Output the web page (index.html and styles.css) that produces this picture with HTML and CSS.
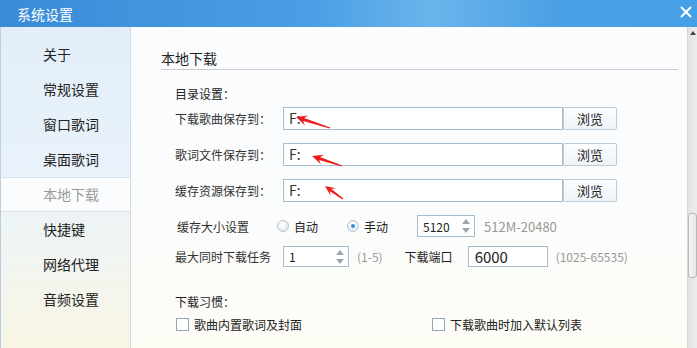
FILE: index.html
```html
<!DOCTYPE html>
<html lang="zh-CN">
  <head>
    <meta charset="UTF-8">
    <title>系统设置</title>
    <link rel="stylesheet" href="styles.css">
  </head>
  <body>
    <div class="window">
      <!-- Title bar -->
      <div class="titlebar">
        <span class="title">系统设置</span>
        <svg class="close" width="12" height="12" viewBox="0 0 12 12">
          <path d="M1 1 L11 11 M11 1 L1 11" stroke="#fff" stroke-width="2" fill="none"/>
        </svg>
      </div>

      <div class="body">
        <!-- Side menu -->
        <ul class="sidebar">
          <li>关于</li>
          <li>常规设置</li>
          <li>窗口歌词</li>
          <li>桌面歌词</li>
          <li class="active">本地下载</li>
          <li>快捷键</li>
          <li>网络代理</li>
          <li>音频设置</li>
        </ul>

        <!-- Settings panel -->
        <div class="content">
          <div class="section-title">本地下载</div>
          <div class="form">
            <div class="group-label">目录设置：</div>

            <div class="path-row first">
              <span class="label">下载歌曲保存到：</span>
              <div class="path-input">F:</div>
              <button class="browse">浏览</button>
            </div>
            <div class="path-row">
              <span class="label">歌词文件保存到：</span>
              <div class="path-input">F:</div>
              <button class="browse">浏览</button>
            </div>
            <div class="path-row">
              <span class="label">缓存资源保存到：</span>
              <div class="path-input">F:</div>
              <button class="browse">浏览</button>
            </div>

            <div class="cache-row">
              <span class="label cache-label">缓存大小设置</span>
              <span class="radio"></span><span class="radio-text">自动</span>
              <span class="radio checked"></span><span class="radio-text">手动</span>
              <div class="spinner cache-size">
                <span class="value">5120</span>
                <span class="arrows"><i class="up"></i><i class="down"></i></span>
              </div>
              <span class="hint size-hint">512M-20480</span>
            </div>

            <div class="task-row">
              <span class="label">最大同时下载任务</span>
              <div class="spinner tasks">
                <span class="value">1</span>
                <span class="arrows"><i class="up"></i><i class="down"></i></span>
              </div>
              <span class="hint">(1-5)</span>
              <span class="port-label">下载端口</span>
              <div class="port-input">6000</div>
              <span class="hint">(1025-65535)</span>
            </div>

            <div class="group-label habit">下载习惯：</div>
            <div class="check-row">
              <label class="check first-check"><span class="box"></span>歌曲内置歌词及封面</label>
              <label class="check"><span class="box"></span>下载歌曲时加入默认列表</label>
            </div>
          </div>
        </div>

        <!-- Scrollbar -->
        <div class="scrollbar">
          <div class="scroll-up"></div>
          <div class="thumb"></div>
        </div>
      </div>

      <!-- Red annotation arrows -->
      <svg class="annotations" width="697" height="348" viewBox="0 0 697 348">
        <polygon fill="#ee1c1c" points="296,117 304.9,125.2 303.2,120.9 329.8,128.6 330.2,127.4 304.1,118.0 308.0,115.6"/>
        <polygon fill="#ee1c1c" points="312,156 320.9,164.2 319.1,160.0 341.8,166.6 342.2,165.4 320.1,157.1 324.0,154.7"/>
        <polygon fill="#ee1c1c" points="325,186 330.5,195.5 329.9,191.2 342.6,199.5 343.4,198.5 331.4,189.1 335.8,188.2"/>
      </svg>
    </div>
  </body>
</html>
```

FILE: styles.css
```css
/* General */
* {
  box-sizing: border-box;
}

body {
  margin: 0;
  width: 697px;
  height: 348px;
  overflow: hidden;
  font-family: "Noto Sans CJK SC", "Microsoft YaHei", sans-serif;
  font-size: 12px;
  color: #333;
}

.window {
  position: relative;
  width: 697px;
  height: 348px;
  display: flex;
  flex-direction: column;
}

/* Title bar */
.titlebar {
  height: 27px;
  display: flex;
  align-items: center;
  justify-content: space-between;
  padding: 0 5px 0 17px;
  background: linear-gradient(90deg, #3a8bd7 0%, #4a9fe4 45%, #6ab4ec 62%, #4aa0e4 80%, #45a0e6 100%);
}

.title {
  color: #fff;
  font-size: 14px;
  line-height: 20px;
}

.close {
  margin-bottom: 4px;
}

.body {
  flex: 1;
  display: flex;
  min-height: 0;
}

/* Side menu */
.sidebar {
  width: 131px;
  margin: 0;
  padding: 10px 0 0;
  list-style: none;
  border-left: 1px solid #b9cfe4;
  border-right: 1px solid #cfdbe6;
  background: linear-gradient(180deg, #e2eef9 0%, #e9f2fa 45%, #f1f5f2 70%, #f8f5e4 100%);
}

.sidebar li {
  height: 35px;
  line-height: 35px;
  padding-left: 42px;
  font-size: 14px;
  color: #222;
}

.sidebar li.active {
  background: #fbfcfd;
  color: #9a9a9a;
  border-top: 1px solid #d8e2ea;
  border-bottom: 1px solid #d8e2ea;
  line-height: 33px;
}

/* Settings panel */
.content {
  flex: 1;
  padding: 21px 9px 0 30px;
  background: linear-gradient(180deg, #fafcfe 0%, #fbfcfc 55%, #fdfcf5 100%);
}

.section-title {
  height: 22px;
  font-size: 14px;
  line-height: 20px;
  color: #222;
  border-bottom: 1px solid #c9cdd1;
}

.form {
  padding-left: 14px;
}

.group-label {
  margin-top: 15px;
  line-height: 18px;
  color: #222;
}

.group-label.habit {
  margin-top: 26px;
}

.label {
  width: 108px;
  color: #333;
}

/* Path rows */
.path-row {
  display: flex;
  align-items: center;
  height: 23px;
  margin-top: 13px;
}

.path-row.first {
  margin-top: 4px;
}

.path-input {
  width: 280px;
  height: 23px;
  border: 1px solid #a7bccf;
  background: #fff;
  padding-left: 5px;
  font-size: 14px;
  line-height: 21px;
  color: #333;
}

.browse {
  width: 54px;
  height: 23px;
  margin: 0;
  padding: 0;
  border: 1px solid #bccbd8;
  border-radius: 2px;
  background: linear-gradient(180deg, #fbfdfe 0%, #eef3f7 100%);
  font-family: inherit;
  font-size: 13px;
  color: #222;
}

/* Cache size row */
.cache-row {
  display: flex;
  align-items: center;
  height: 22px;
  margin-top: 13px;
}

.cache-label {
  width: 100px;
  margin-left: 2px;
}

.radio {
  width: 12px;
  height: 12px;
  border-radius: 50%;
  border: 1px solid #b7c3cd;
  background: radial-gradient(circle at 40% 35%, #fff 0%, #dfe6ec 100%);
  position: relative;
}

.radio.checked {
  margin-left: 29px;
}

.radio.checked::after {
  content: "";
  position: absolute;
  left: 3px;
  top: 3px;
  width: 4px;
  height: 4px;
  border-radius: 50%;
  background: #2f8fdc;
}

.radio-text {
  margin-left: 5px;
  color: #222;
}

.spinner {
  height: 22px;
  border: 1px solid #a7bccf;
  background: #fff;
  display: flex;
  align-items: center;
  justify-content: space-between;
  padding: 0 4px 0 5px;
  color: #222;
}

.spinner.cache-size {
  width: 58px;
  margin-left: 29px;
}

.spinner.tasks {
  width: 66px;
  height: 21px;
}

.arrows {
  display: flex;
  flex-direction: column;
  gap: 4px;
}

.arrows i {
  width: 0;
  height: 0;
  border-left: 4px solid transparent;
  border-right: 4px solid transparent;
}

.arrows .up {
  border-bottom: 5px solid #9aa7b2;
}

.arrows .down {
  border-top: 5px solid #9aa7b2;
}

.hint {
  margin-left: 8px;
  color: #999;
}

.size-hint {
  margin-left: 9px;
  font-size: 13px;
}

/* Task / port row */
.task-row {
  display: flex;
  align-items: center;
  height: 21px;
  margin-top: 9px;
}

.port-label {
  margin-left: 22px;
  color: #222;
}

.port-input {
  width: 80px;
  height: 21px;
  margin-left: 15px;
  border: 1px solid #a7bccf;
  background: #fff;
  padding-left: 6px;
  font-size: 15px;
  line-height: 19px;
  color: #222;
}

/* Habit checkboxes */
.check-row {
  display: flex;
  align-items: center;
  height: 19px;
  margin-top: 4px;
}

.check {
  display: flex;
  align-items: center;
  color: #222;
}

.first-check {
  width: 256px;
  margin-left: 1px;
}

.box {
  width: 13px;
  height: 13px;
  margin-right: 5px;
  border: 1px solid #93a6b8;
  background: #fff;
}

/* Scrollbar */
.scrollbar {
  width: 10px;
  position: relative;
  border-left: 1px solid #d6d6d6;
  background: linear-gradient(90deg, #e3e3e3, #ededed);
}

.scroll-up {
  margin: 4px auto 0;
  width: 0;
  height: 0;
  border-left: 3px solid transparent;
  border-right: 3px solid transparent;
  border-bottom: 4px solid #444;
}

.thumb {
  position: absolute;
  left: 0;
  top: 186px;
  width: 9px;
  height: 65px;
  border: 1px solid #b8b8b8;
  border-radius: 3px;
  background: linear-gradient(90deg, #f4f4f4, #e6e6e6);
}

/* Overlay annotations */
.annotations {
  position: absolute;
  left: 0;
  top: 0;
  pointer-events: none;
}
```
